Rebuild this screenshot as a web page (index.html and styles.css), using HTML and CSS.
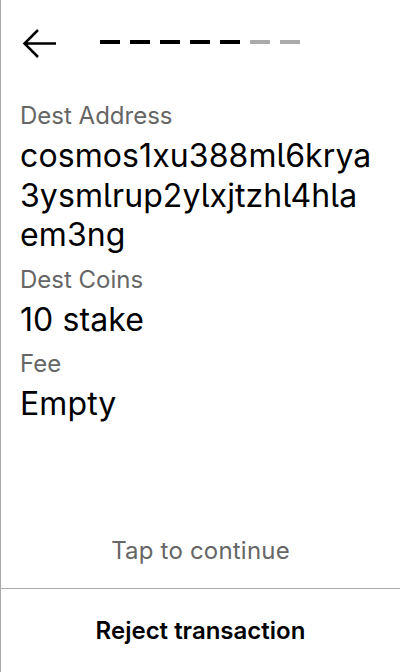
FILE: index.html
```html
<!DOCTYPE html>
<html>
<head>
<meta charset="utf-8">
<link rel="stylesheet" href="styles.css">
</head>
<body>
<div class="screen">
  <div class="header">
    <svg class="back" width="36" height="32" viewBox="22 28 36 32">
      <path d="M38 30 L24.5 43.5 L38 57 M24.5 43.5 H56" fill="none" stroke="#000" stroke-width="2.5"/>
    </svg>
    <div class="progress">
      <span class="dash done"></span>
      <span class="dash done"></span>
      <span class="dash done"></span>
      <span class="dash done"></span>
      <span class="dash done"></span>
      <span class="dash"></span>
      <span class="dash"></span>
    </div>
  </div>
  <div class="content">
    <div class="field">
      <div class="label">Dest Address</div>
      <div class="value">cosmos1xu388ml6krya<br>3ysmlrup2ylxjtzhl4hla<br>em3ng</div>
    </div>
    <div class="field">
      <div class="label">Dest Coins</div>
      <div class="value">10 stake</div>
    </div>
    <div class="field">
      <div class="label">Fee</div>
      <div class="value">Empty</div>
    </div>
  </div>
  <div class="tap">Tap to continue</div>
  <div class="footer">Reject transaction</div>
</div>
</body>
</html>
```

FILE: styles.css
```css
html, body {
  margin: 0;
  padding: 0;
  background: #fff;
}
.screen {
  width: 400px;
  height: 672px;
  box-sizing: border-box;
  border-left: 1px solid #aaa;
  display: flex;
  flex-direction: column;
  font-family: Inter, "Noto Sans", sans-serif;
  font-feature-settings: "cv05";
  color: #000;
}
.header {
  display: flex;
  align-items: flex-start;
  padding: 28px 0 0 21px;
}
.back {
  display: block;
}
.progress {
  display: flex;
  gap: 10px;
  margin: 12px 0 0 42px;
}
.dash {
  width: 20px;
  height: 4px;
  background: #aaa;
}
.dash.done {
  background: #000;
}
.content {
  padding: 40px 19px 0;
  display: flex;
  flex-direction: column;
  gap: 9px;
}
.label {
  font-size: 24px;
  line-height: 31px;
  color: #666;
}
.value {
  margin-top: 5px;
  font-size: 32px;
  line-height: 39.5px;
  letter-spacing: 0.1px;
}
.tap {
  margin-top: auto;
  text-align: center;
  font-size: 24px;
  line-height: 29px;
  letter-spacing: 0.2px;
  color: #666;
  padding-bottom: 23px;
}
.footer {
  border-top: 1px solid #aaa;
  height: 83px;
  display: flex;
  align-items: center;
  justify-content: center;
  font-size: 24px;
  font-weight: 600;
}
```
